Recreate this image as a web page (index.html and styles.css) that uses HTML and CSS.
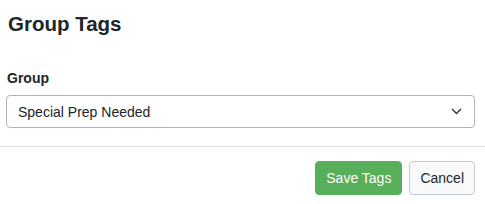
FILE: index.html
```html
<!DOCTYPE html>
<html lang="en">
<head>
    <meta charset="UTF-8">
    <title>Group Tags</title>
    <link rel="stylesheet" href="styles.css">
</head>
<body>
    <div class="modal">
        <!-- Header -->
        <div class="modal-header">
            <h2 class="modal-title">Group Tags</h2>
        </div>

        <!-- Body -->
        <div class="modal-body">
            <label class="field-label">Group</label>
            <div class="select-box">
                <span class="select-value">Special Prep Needed</span>
                <svg class="chevron" width="11" height="7" viewBox="0 0 11 7">
                    <path d="M1 1 L5.5 5.5 L10 1" fill="none" stroke="#343a40" stroke-width="1.5"/>
                </svg>
            </div>
        </div>

        <!-- Footer -->
        <div class="modal-footer">
            <button class="btn btn-save">Save Tags</button>
            <button class="btn btn-cancel">Cancel</button>
        </div>
    </div>
</body>
</html>
```

FILE: styles.css
```css
* {
    margin: 0;
    padding: 0;
    box-sizing: border-box;
}

body {
    font-family: 'Liberation Sans', Arial, sans-serif;
    background: #ffffff;
    color: #212529;
}

.modal {
    width: 485px;
}

.modal-header {
    padding: 12px 8px 0;
}

.modal-title {
    font-size: 20.5px;
    font-weight: bold;
    line-height: 24px;
    color: #212529;
}

.modal-body {
    padding: 32px 10px 18px 6px;
}

.field-label {
    display: block;
    font-size: 14px;
    font-weight: bold;
    line-height: 21px;
    margin-bottom: 6px;
    padding-left: 1px;
}

.select-box {
    height: 33px;
    border: 1px solid #aeb4bb;
    border-radius: 4px;
    display: flex;
    align-items: center;
    justify-content: space-between;
    padding: 0 12px 0 11px;
    font-size: 14px;
    color: #212529;
}

.modal-footer {
    border-top: 1px solid #dee2e6;
    padding: 14px 10px 9px;
    display: flex;
    justify-content: flex-end;
    gap: 7px;
}

.btn {
    height: 34px;
    padding: 0 10px;
    font-family: 'Liberation Sans', Arial, sans-serif;
    font-size: 14px;
    border-radius: 4px;
    cursor: pointer;
}

.btn-save {
    background: #57ae5b;
    border: 1px solid #57ae5b;
    color: #ffffff;
}

.btn-cancel {
    background: #f8f9fa;
    border: 1px solid #c4c9ce;
    color: #212529;
}
```
